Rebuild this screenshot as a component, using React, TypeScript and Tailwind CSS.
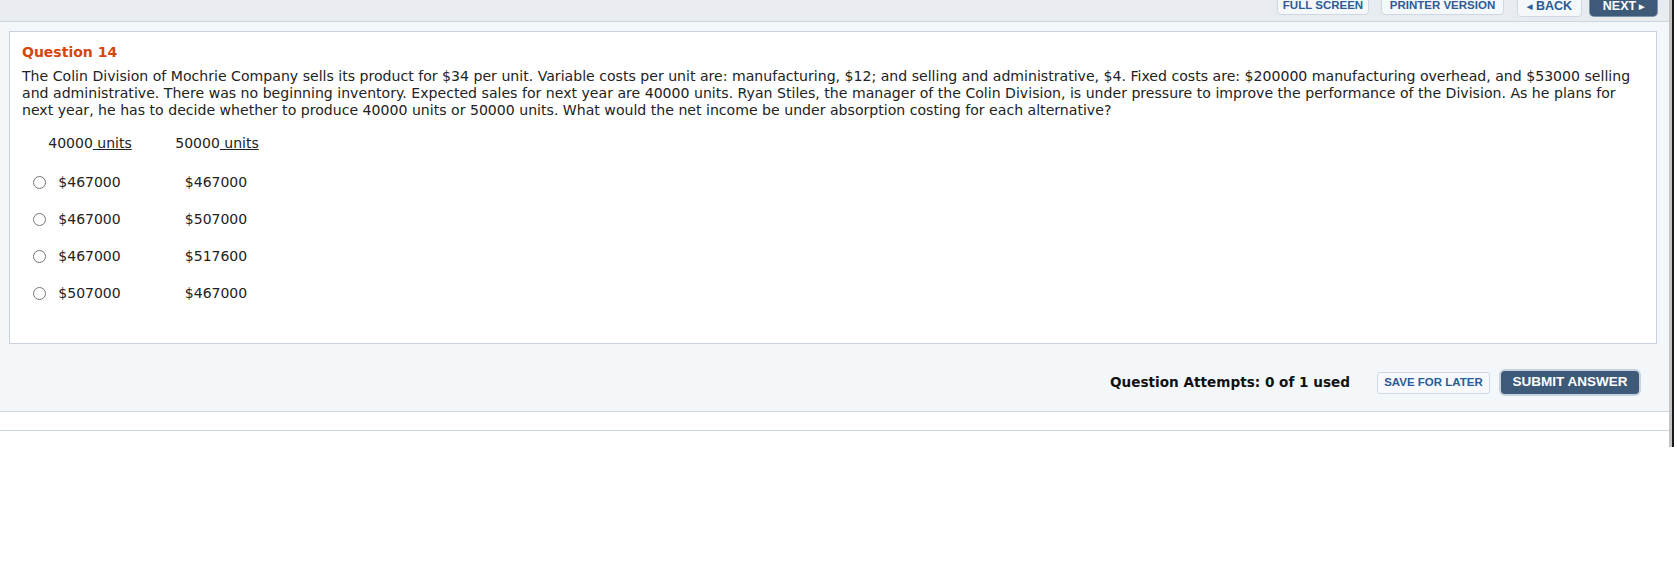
import React from 'react'

const verdana = { fontFamily: '"DejaVu Sans", Verdana, sans-serif' }

const choices = [
  ['$467000', '$467000'],
  ['$467000', '$507000'],
  ['$467000', '$517600'],
  ['$507000', '$467000'],
]

function TopButton({ label, w }: { label: string; w: string }) {
  return (
    <button
      type="button"
      className={`-mt-[4px] flex h-[19px] ${w} items-center justify-center rounded-[4px] border border-[#cfd8e2] bg-[#f5f8fb] font-['Liberation_Sans',Arial,sans-serif] text-[11.5px] font-bold leading-none text-[#2c5b97]`}
    >
      {label}
    </button>
  )
}

export default function App() {
  return (
    <div className="flex h-[568px] w-[1677px] overflow-hidden bg-white" style={verdana}>
      <div className="flex w-[1669px] shrink-0 flex-col">
        {/* top nav */}
        <div className="flex h-[22px] items-start justify-end overflow-hidden border-b border-[#cdd5df] bg-[#e8ecf0] pr-[12px]">
          <TopButton label="FULL SCREEN" w="w-[92px]" />
          <div className="ml-[12px]">
            <TopButton label="PRINTER VERSION" w="w-[123px]" />
          </div>
          <button
            type="button"
            className="-mt-[4px] ml-[13px] flex h-[21px] w-[65px] items-center justify-center gap-[4px] rounded-[4px] border border-[#cfd8e2] bg-[#f5f8fb] font-['Liberation_Sans',Arial,sans-serif] text-[12.5px] font-bold leading-none text-[#2c5b97]"
          >
            <span className="text-[7px]">◀</span>BACK
          </button>
          <button
            type="button"
            className="-mt-[4px] ml-[8px] flex h-[20px] w-[67px] items-center justify-center gap-[3px] rounded-[4px] bg-[#3d5a78] font-['Liberation_Sans',Arial,sans-serif] text-[12.5px] font-bold leading-none text-white shadow-[0_0_0_1px_#7f93a8]"
          >
            NEXT<span className="text-[7px]">▶</span>
          </button>
        </div>

        {/* question body */}
        <div className="bg-[#f4f7fa] pl-[9px] pr-[12px] pt-[9px]">
          <div className="h-[313px] border border-[#c9d2dc] bg-white px-[12px] pt-[12px]">
            <h2 className="text-[14px] font-bold leading-[17px] text-[#d4470c]">Question 14</h2>
            <p className="mt-[7px] whitespace-nowrap text-[14.1px] leading-[17px] text-[#222]">
              The Colin Division of Mochrie Company sells its product for $34 per unit. Variable costs per unit are:
              manufacturing, $12; and selling and administrative, $4. Fixed costs are: $200000 manufacturing overhead,
              and $53000 selling
              <br />
              and administrative. There was no beginning inventory. Expected sales for next year are 40000 units. Ryan
              Stiles, the manager of the Colin Division, is under pressure to improve the performance of the Division. As
              he plans for
              <br />
              next year, he has to decide whether to produce 40000 units or 50000 units. What would the net income be
              under absorption costing for each alternative?
            </p>

            <div className="mt-[16px] flex h-[17px] items-center text-[14px] text-[#222]">
              <div className="w-[24px]" />
              <div className="w-[88px] text-center">
                40000<span className="underline"> units</span>
              </div>
              <div className="w-[166px] text-center">
                50000<span className="underline"> units</span>
              </div>
            </div>

            <div className="mt-[12px] flex flex-col">
              {choices.map(([a, b], i) => (
                <label key={i} className="flex h-[37px] items-center text-[14px] text-[#222]">
                  <input type="radio" name="q14" className="m-0 ml-[11px] h-[13px] w-[13px]" />
                  <div className="w-[87px] text-center">{a}</div>
                  <div className="w-[166px] text-center">{b}</div>
                </label>
              ))}
            </div>
          </div>

          {/* footer */}
          <div className="-ml-[9px] -mr-[12px] flex h-[68px] items-center justify-end border-b border-[#cdd5df] pr-[30px] pt-[10px]">
            <span className="text-[13.6px] font-bold text-[#111]">Question Attempts: 0 of 1 used</span>
            <button
              type="button"
              className="ml-[27px] flex h-[22px] w-[113px] items-center justify-center rounded-[3px] border border-[#cfd8e2] bg-[#f7f9fc] font-['Liberation_Sans',Arial,sans-serif] text-[11.5px] font-bold text-[#2c5b97]"
            >
              SAVE FOR LATER
            </button>
            <button
              type="button"
              className="ml-[11px] flex h-[23px] w-[138px] items-center justify-center rounded-[4px] bg-[#3d5a78] font-['Liberation_Sans',Arial,sans-serif] text-[13.5px] font-bold text-white shadow-[0_0_0_2px_#c7d2dd]"
            >
              SUBMIT ANSWER
            </button>
          </div>
        </div>

        <div className="h-[19px] border-b border-[#cdd5df] bg-white" />
      </div>

      {/* window edge */}
      <div className="flex h-[447px] shrink-0">
        <div className="w-[3px] bg-[#c4c4c4]" />
        <div className="w-[2px] bg-[#1a1a1a]" />
      </div>
    </div>
  )
}
